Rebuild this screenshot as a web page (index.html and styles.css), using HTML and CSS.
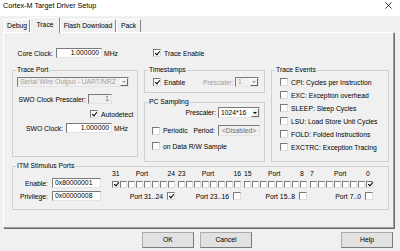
FILE: index.html
```html
<!DOCTYPE html>
<html lang="en">
<head>
  <meta charset="UTF-8" />
  <title>Cortex-M Target Driver Setup</title>
  <link rel="stylesheet" href="styles.css">
</head>
<body>

  <div class="titlebar">
    <span class="title">Cortex-M Target Driver Setup</span>
    <svg class="close" viewBox="0 0 7 7"><path d="M0.5 0.5 L6.5 6.5 M6.5 0.5 L0.5 6.5" stroke="#000" stroke-width="0.8" fill="none"/></svg>
  </div>

  <div class="tabs">
    <span class="tab tab-debug">Debug</span>
    <span class="tab tab-trace active">Trace</span>
    <span class="tab tab-flash">Flash Download</span>
    <span class="tab tab-pack">Pack</span>
  </div>

  <div class="page">
    <div class="top-row">
      <span class="lbl core-lbl">Core Clock:</span>
      <span class="edit num clock">1.000000</span>
      <span class="unit">MHz</span>
      <span class="check trace-enable"><span class="cb on"></span>Trace Enable</span>
    </div>

    <div class="groups">
      <!-- Trace Port -->
      <fieldset class="group trace-port">
        <legend>Trace Port</legend>
        <div class="combo off port-combo"><span class="val">Serial Wire Output - UART/NRZ</span><span class="drop"></span></div>
        <div class="line swo-pre">
          <span class="lbl">SWO Clock Prescaler:</span>
          <span class="edit off num small">1</span>
        </div>
        <div class="line autodetect">
          <span class="check"><span class="cb on"></span>Autodetect</span>
        </div>
        <div class="line swo-clock">
          <span class="lbl">SWO Clock:</span>
          <span class="edit num clock">1.000000</span>
          <span class="unit">MHz</span>
        </div>
      </fieldset>

      <div class="mid">
        <!-- Timestamps -->
        <fieldset class="group timestamps">
          <legend>Timestamps</legend>
          <div class="line ts-line">
            <span class="check ts-enable"><span class="cb on"></span>Enable</span>
            <span class="lbl dim ts-pre">Prescaler:</span>
            <div class="combo off small"><span class="val">1</span><span class="drop"></span></div>
          </div>
        </fieldset>

        <!-- PC Sampling -->
        <fieldset class="group pc">
          <legend>PC Sampling</legend>
          <div class="line pc-pre">
            <span class="lbl">Prescaler:</span>
            <div class="combo wide"><span class="val">1024*16</span><span class="drop"></span></div>
          </div>
          <div class="line pc-periodic">
            <span class="check periodic"><span class="cb"></span>Periodic</span>
            <span class="lbl period-lbl">Period:</span>
            <span class="edit off center wide">&lt;Disabled&gt;</span>
          </div>
          <div class="line pc-data">
            <span class="check"><span class="cb"></span>on Data R/W Sample</span>
          </div>
        </fieldset>
      </div>

      <!-- Trace Events -->
      <fieldset class="group events">
        <legend>Trace Events</legend>
        <div class="event-list">
          <span class="check"><span class="cb"></span>CPI: Cycles per Instruction</span>
          <span class="check"><span class="cb"></span>EXC: Exception overhead</span>
          <span class="check"><span class="cb"></span>SLEEP: Sleep Cycles</span>
          <span class="check"><span class="cb"></span>LSU: Load Store Unit Cycles</span>
          <span class="check"><span class="cb"></span>FOLD: Folded Instructions</span>
          <span class="check"><span class="cb"></span>EXCTRC: Exception Tracing</span>
        </div>
      </fieldset>
    </div>

    <!-- ITM Stimulus Ports -->
    <fieldset class="group itm">
      <legend>ITM Stimulus Ports</legend>
      <div class="itm-body">
        <div class="itm-regs">
          <div class="line reg">
            <span class="lbl">Enable:</span>
            <span class="edit reg-edit">0x80000001</span>
          </div>
          <div class="line reg">
            <span class="lbl">Privilege:</span>
            <span class="edit reg-edit">0x00000008</span>
          </div>
        </div>

        <div class="ports">
          <div class="pg">
            <div class="pg-head"><span class="hi">31</span><span class="pname">Port</span><span>24</span></div>
            <div class="pg-bits">
              <span class="cb bit on"></span><span class="cb bit"></span><span class="cb bit"></span><span class="cb bit"></span>
              <span class="cb bit"></span><span class="cb bit"></span><span class="cb bit"></span><span class="cb bit"></span>
            </div>
            <div class="pg-foot"><span class="pg-lbl">Port 31..24</span><span class="cb on"></span></div>
          </div>
          <div class="pg">
            <div class="pg-head"><span class="hi">23</span><span class="pname">Port</span><span>16</span></div>
            <div class="pg-bits">
              <span class="cb bit"></span><span class="cb bit"></span><span class="cb bit"></span><span class="cb bit"></span>
              <span class="cb bit"></span><span class="cb bit"></span><span class="cb bit"></span><span class="cb bit"></span>
            </div>
            <div class="pg-foot"><span class="pg-lbl">Port 23..16</span><span class="cb"></span></div>
          </div>
          <div class="pg">
            <div class="pg-head"><span class="hi">15</span><span class="pname">Port</span><span>8</span></div>
            <div class="pg-bits">
              <span class="cb bit"></span><span class="cb bit"></span><span class="cb bit"></span><span class="cb bit"></span>
              <span class="cb bit"></span><span class="cb bit"></span><span class="cb bit"></span><span class="cb bit"></span>
            </div>
            <div class="pg-foot"><span class="pg-lbl">Port 15..8</span><span class="cb"></span></div>
          </div>
          <div class="pg">
            <div class="pg-head"><span class="hi">7</span><span class="pname">Port</span><span>0</span></div>
            <div class="pg-bits">
              <span class="cb bit"></span><span class="cb bit"></span><span class="cb bit"></span><span class="cb bit"></span>
              <span class="cb bit"></span><span class="cb bit"></span><span class="cb bit"></span><span class="cb bit on"></span>
            </div>
            <div class="pg-foot"><span class="pg-lbl">Port 7..0</span><span class="cb"></span></div>
          </div>
        </div>
      </div>
    </fieldset>
  </div>

  <div class="buttons">
    <span class="btn">OK</span>
    <span class="btn">Cancel</span>
    <span class="btn help">Help</span>
  </div>

</body>
</html>
```

FILE: styles.css
```css
* {
  box-sizing: border-box;
}
body {
  margin: 0;
  width: 400px;
  height: 251px;
  overflow: hidden;
  background: #f0f0f0;
  font-family: "Liberation Sans", Arial, sans-serif;
  font-size: 6.8px;
  color: #000;
}

/* window chrome */
.titlebar {
  height: 16px;
  background: #fff;
  display: flex;
  justify-content: space-between;
  align-items: flex-start;
  padding: 1px 8px 0 3px;
}
.title {
  font-size: 7.2px;
  line-height: 9px;
}
.close {
  width: 7px;
  height: 7px;
  margin-top: 1px;
}
.tabs {
  height: 16px;
  display: flex;
  align-items: flex-end;
  padding-left: 4px;
}
.tab {
  height: 13px;
  line-height: 12px;
  text-align: center;
  border-top: 1px solid #fff;
  border-left: 1px solid #fff;
  border-right: 1px solid #8a8a8a;
  border-radius: 1px 1px 0 0;
}
.tab-debug { width: 26px; }
.tab-trace { width: 30px; }
.tab-flash { width: 56px; }
.tab-pack { width: 25px; }
.tab.active {
  height: 16px;
  line-height: 13px;
  margin-bottom: -1px;
  background: #f0f0f0;
  z-index: 1;
}
.page {
  margin-left: 3px;
  width: 391px;
  height: 196px;
  border: 1px solid;
  border-color: #fff #a0a0a0 #a0a0a0 #fff;
  box-shadow: 1px 1px 0 #696969;
  padding: 15px 4px 0 8px;
}

/* controls */
.line {
  display: flex;
  align-items: center;
}
.lbl {
  white-space: nowrap;
}
.dim {
  color: #a0a0a0;
}
.edit {
  display: block;
  height: 10px;
  line-height: 8px;
  padding: 0 2px;
  border: 1px solid;
  border-color: #7a7a7a #e3e3e3 #e3e3e3 #7a7a7a;
  background: #fff;
  white-space: nowrap;
  overflow: hidden;
}
.edit.num { text-align: right; }
.edit.center { text-align: center; }
.edit.off {
  background: #f0f0f0;
  color: #6d6d6d;
}
.clock { width: 46px; }
.small { width: 24px; }
.wide { width: 42px; }
.unit {
  margin-left: 2px;
  width: 16px;
}
.combo {
  display: flex;
  height: 10px;
  border: 1px solid;
  border-color: #7a7a7a #e3e3e3 #e3e3e3 #7a7a7a;
  background: #fff;
}
.combo .val {
  flex: 1;
  padding-left: 2px;
  line-height: 8px;
  white-space: nowrap;
  overflow: hidden;
}
.combo .drop {
  width: 8px;
  border: 1px solid;
  border-color: #fff #696969 #696969 #fff;
  background: #f0f0f0;
  display: flex;
  align-items: center;
  justify-content: center;
}
.combo .drop::after {
  content: "";
  border-left: 2px solid transparent;
  border-right: 2px solid transparent;
  border-top: 2px solid #000;
}
.combo.off {
  background: #f0f0f0;
  color: #a0a0a0;
}
.combo.off .drop::after {
  border-top-color: #a0a0a0;
}
.check {
  display: flex;
  align-items: center;
  gap: 3px;
  height: 8px;
  white-space: nowrap;
}
.cb {
  display: block;
  flex: none;
  width: 8px;
  height: 8px;
  border: 1px solid;
  border-color: #7a7a7a #dcdcdc #dcdcdc #7a7a7a;
  background: #fff;
  position: relative;
}
.cb.on::after {
  content: "";
  position: absolute;
  left: 2px;
  top: 0;
  width: 2px;
  height: 4px;
  border: solid #000;
  border-width: 0 1px 1px 0;
  transform: rotate(40deg);
}

/* top row */
.top-row {
  display: flex;
  align-items: center;
  height: 10px;
}
.core-lbl {
  width: 44px;
  text-align: right;
  padding-right: 3px;
}
.trace-enable {
  margin-left: 33px;
}

/* group boxes */
.group {
  margin: 0;
  padding: 0;
  min-width: 0;
  border: 1px solid #d0d0d0;
}
.group legend {
  padding: 0 1px;
  margin-left: 3px;
  line-height: 8px;
}
.groups {
  display: flex;
  align-items: flex-start;
  gap: 6px;
  margin-top: 8px;
}
.trace-port {
  width: 126px;
  height: 91px;
}
.port-combo {
  width: 112px;
  margin: 3px 0 0 4px;
}
.swo-pre {
  margin-top: 7px;
  height: 10px;
}
.swo-pre .lbl {
  width: 75px;
  text-align: right;
  padding-right: 2px;
}
.autodetect {
  margin-top: 6px;
  padding-left: 77px;
}
.swo-clock {
  margin-top: 5px;
  height: 10px;
}
.swo-clock .lbl {
  width: 53px;
  text-align: right;
  padding-right: 3px;
}
.mid {
  display: flex;
  flex-direction: column;
  gap: 5px;
  width: 121px;
}
.timestamps {
  height: 27px;
}
.ts-line {
  margin-top: 3px;
  height: 10px;
}
.ts-enable {
  width: 50px;
  margin-left: 8px;
}
.ts-pre {
  width: 32px;
}
.pc {
  height: 64px;
}
.pc-pre {
  margin-top: 1px;
  height: 11px;
  justify-content: flex-end;
  padding-right: 4px;
}
.pc-pre .lbl {
  margin-right: 2px;
}
.pc .combo,
.pc .edit {
  height: 11px;
}
.pc .combo .val,
.pc .edit {
  line-height: 9px;
}
.pc-periodic {
  margin-top: 7px;
  height: 11px;
}
.periodic {
  width: 39px;
  margin-left: 7px;
}
.period-lbl {
  width: 25px;
  text-align: right;
  padding-right: 1px;
  margin-right: 2px;
}
.pc-data {
  margin-top: 6px;
  padding-left: 7px;
}
.events {
  width: 118px;
  height: 96px;
}
.event-list {
  display: flex;
  flex-direction: column;
  gap: 5px;
  padding: 4px 0 0 8px;
}

/* ITM */
.itm {
  height: 48px;
}
.itm-body {
  display: flex;
}
.reg {
  height: 10px;
  margin-top: 3px;
}
.reg:first-child {
  margin-top: 8px;
}
.reg .lbl {
  width: 37px;
  text-align: right;
  padding-right: 2px;
}
.reg-edit {
  width: 49px;
  margin-left: 2px;
}
.ports {
  display: flex;
  gap: 3px;
  margin-left: 11px;
}
.pg {
  width: 63px;
}
.pg-head {
  display: flex;
  height: 8px;
  line-height: 8px;
}
.pg-head .hi {
  width: 24px;
}
.pg-head .pname {
  width: 32px;
}
.pg-bits {
  display: flex;
  gap: 1px;
  margin-top: 3px;
}
.cb.bit {
  width: 7px;
  height: 7px;
}
.cb.bit.on::after {
  left: 2px;
  top: -1px;
}
.pg-foot {
  display: flex;
  align-items: center;
  justify-content: flex-end;
  height: 8px;
  margin-top: 4px;
}
.pg-lbl {
  margin-right: 4px;
  white-space: nowrap;
}

/* dialog buttons */
.buttons {
  display: flex;
  height: 16px;
  margin-top: 4px;
  padding: 0 7px 0 142px;
}
.btn {
  width: 52px;
  height: 16px;
  line-height: 14px;
  text-align: center;
  background: #e1e1e1;
  border: 1px solid;
  border-color: #adadad #7a7a7a #7a7a7a #adadad;
  margin-right: 6px;
}
.btn.help {
  margin: 0 0 0 auto;
}
```
